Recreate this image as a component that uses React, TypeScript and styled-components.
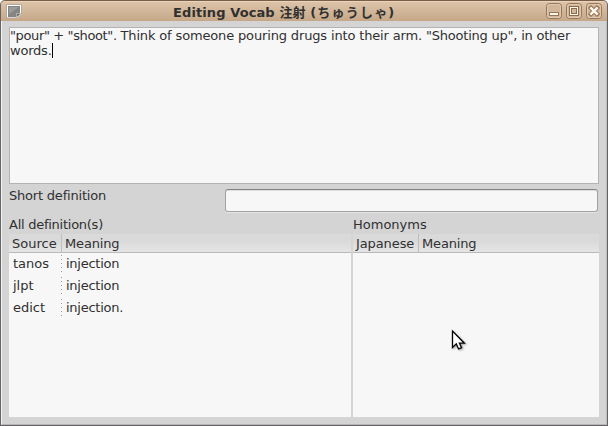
import React from "react";
import styled, { createGlobalStyle } from "styled-components";

const Global = createGlobalStyle`
  * { box-sizing: border-box; }
  body { margin: 0; background: #fff; overflow: hidden; }
`;

const Window = styled.main`
  position: relative;
  display: flex;
  flex-direction: column;
  width: 608px;
  height: 426px;
  overflow: hidden;
  background: #d4d4d4;
  color: #303030;
  font: 13px/15px "DejaVu Sans", "Noto Sans CJK JP", sans-serif;
  border: solid #656365;
  border-width: 0 1px 1px;
  border-radius: 5px 5px 0 0;
`;

const TitleBar = styled.header`
  display: grid;
  grid-template-columns: 167px 1fr 61px;
  align-items: start;
  flex: 0 0 21px;
  margin: 0 -1px;
  padding-left: 5px;
  border-top: 1px solid #785f48;
  border-left: 1px solid #9b7b5c;
  border-right: 1px solid #8a6b4c;
  border-radius: 5px 5px 0 0;
  background: linear-gradient(#ead2bb 0 1px, #dcc3a9 1px, #c6a888);
  & > svg { margin-top: 2px; }
`;

const Title = styled.h1`
  margin: 3px 0 0 0;
  font: bold 13px/18px "DejaVu Sans", "Noto Sans CJK JP", sans-serif;
  height: 17px;
  letter-spacing: 0.1px;
  white-space: nowrap;
`;

const Reading = styled.span`
  letter-spacing: 1.2px;
`;

const Controls = styled.div`
  display: flex;
  gap: 4px;
  padding-top: 2px;
`;

const ControlButton = styled.button`
  width: 16px;
  height: 16px;
  padding: 0;
  border: 0;
  background: none;
  svg { display: block; }
`;

const Body = styled.section`
  display: flex;
  flex-direction: column;
  flex: 1;
  padding: 6px 7px 7px 7px;
  border-left: 1px solid #f4f4f4;
  border-right: 1px solid #bdbdbd;
  border-bottom: 1px solid #b5b5b5;
`;

const Notes = styled.div`
  flex: 0 0 157px;
  border: 1px solid #b3b3b3;
  background: #f7f7f7;
`;

const Line = styled.div`
  display: flex;
  height: 15px;
  white-space: pre;
`;

const Text = styled.span<{ $tracking: number }>`
  letter-spacing: ${(p) => p.$tracking}px;
`;

const Caret = styled.span`
  width: 1px;
  height: 15px;
  background: #000;
`;

const Field = styled.label`
  display: flex;
  justify-content: space-between;
  flex: 0 0 33px;
  padding: 4px 1px 0 0;
`;

const Entry = styled.input`
  width: 373px;
  height: 23px;
  margin-top: 1px;
  border: 1px solid #a1a1a1;
  border-top-color: #858585;
  border-radius: 3px;
  background: #f7f7f7;
  box-shadow: 0 1px #e6e6e6, inset 0 1px #ddd;
  outline: 0;
`;

const Tables = styled.div`
  display: grid;
  grid-template-columns: 342px 246px;
  gap: 2px;
  flex: 1;
`;

const Panel = styled.section`
  display: flex;
  flex-direction: column;
`;

const PanelTitle = styled.div`
  height: 17px;
`;

const Grid = styled.div`
  flex: 1;
  background: #f7f7f7;
`;

const HeaderRow = styled.div<{ $first: number }>`
  display: grid;
  grid-template-columns: ${(p) => p.$first}px 1fr;
  height: 19px;
  border-bottom: 1px solid #bababa;
  background: linear-gradient(#dadada, #d9d9d9 35%, #e5e5e5);
`;

const HeaderCell = styled.div`
  padding: 2px 0 0 3px;
  & + & { border-left: 1px solid #bdbdbd; }
`;

const Row = styled.div`
  display: grid;
  grid-template-columns: 52px 1fr;
  height: 22px;
`;

const Cell = styled.div`
  padding: 3px 0 0 4px;
  & + & {
    padding-left: 5px;
    letter-spacing: -0.25px;
    background: repeating-linear-gradient(#999 0 1px, transparent 1px 4px) 0 2px / 1px 18px no-repeat;
  }
`;

const Pointer = styled.svg`
  position: absolute;
  left: 449px;
  top: 329px;
  filter: drop-shadow(1px 1px 1px rgba(0, 0, 0, 0.35));
`;

const definitions = [
  ["tanos", "injection"],
  ["jlpt", "injection"],
  ["edict", "injection."],
];

function Control({ kind }: { kind: "minimize" | "maximize" | "close" }) {
  return (
    <ControlButton aria-label={kind}>
      <svg width="16" height="16" viewBox="0 0 16 16" fill="none">
        <rect x=".5" y=".5" width="15" height="15" rx="3" fill="#d2b69a" stroke="#94775a" />
        <rect x="1.5" y="1.5" width="13" height="13" rx="2" stroke="#e0c9b1" />
        {kind === "minimize" && <rect x="3.5" y="9.5" width="9" height="3" fill="#fff4e8" stroke="#967859" />}
        {kind === "maximize" && (
          <>
            <rect x="4.5" y="4.5" width="7" height="7" stroke="#8b6d50" strokeWidth="3" />
            <rect x="4.5" y="4.5" width="7" height="7" stroke="#fff4e8" />
          </>
        )}
        {kind === "close" && (
          <>
            <path d="m3.5 3.5 9 9m0-9-9 9" stroke="#8b6d50" strokeWidth="4.4" />
            <path d="m4.3 4.3 7.4 7.4m0-7.4-7.4 7.4" stroke="#fff4e8" strokeWidth="2.6" />
          </>
        )}
      </svg>
    </ControlButton>
  );
}

export default function App() {
  return (
    <>
      <Global />
      <Window>
        <TitleBar>
          <svg width="16" height="16" viewBox="0 0 16 16">
            <path d="M.5 1.5h15V11l-4 4H.5z" fill="#fff" stroke="#b3a79b" />
            <path d="M2 3h12v7.5L10.5 14H2z" fill="#858683" />
            <path d="M3 4h10L3 11z" fill="#9b9c99" />
            <path d="M10.5 14.5v-4h4.5z" fill="#666762" stroke="#c9cac6" strokeWidth=".7" />
          </svg>
          <Title>
            Editing Vocab 注射 <Reading>(ちゅうしゃ)</Reading>
          </Title>
          <Controls>
            <Control kind="minimize" />
            <Control kind="maximize" />
            <Control kind="close" />
          </Controls>
        </TitleBar>
        <Body>
          <Notes>
            <Line>
              <Text $tracking={-0.37}>{'"pour" + "shoot". '}</Text>
              <Text $tracking={-0.15}>{"Think of someone pouring drugs into their arm. "}</Text>
              <Text $tracking={-0.22}>{'"Shooting up", in other'}</Text>
            </Line>
            <Line>
              <Text $tracking={-0.22}>words.</Text>
              <Caret />
            </Line>
          </Notes>
          <Field>
            <Text $tracking={-0.2}>Short definition</Text>
            <Entry />
          </Field>
          <Tables>
            <Panel>
              <PanelTitle>
                <Text $tracking={-0.26}>All definition(s)</Text>
              </PanelTitle>
              <Grid>
                <HeaderRow $first={52}>
                  <HeaderCell>Source</HeaderCell>
                  <HeaderCell>
                    <Text $tracking={-0.15}>Meaning</Text>
                  </HeaderCell>
                </HeaderRow>
                {definitions.map(([source, meaning]) => (
                  <Row key={source}>
                    <Cell>{source}</Cell>
                    <Cell>{meaning}</Cell>
                  </Row>
                ))}
              </Grid>
            </Panel>
            <Panel>
              <PanelTitle>Homonyms</PanelTitle>
              <Grid>
                <HeaderRow $first={65}>
                  <HeaderCell>
                    <Text $tracking={-0.1}>Japanese</Text>
                  </HeaderCell>
                  <HeaderCell>
                    <Text $tracking={-0.15}>Meaning</Text>
                  </HeaderCell>
                </HeaderRow>
              </Grid>
            </Panel>
          </Tables>
        </Body>
        <Pointer width="18" height="23" viewBox="0 0 18 23">
          <path d="M2.5 2v16.5l3.8-3.6 2.3 5 3-1.2-2.2-4.5h5z" fill="#fff" stroke="#000" strokeWidth="1.3" />
        </Pointer>
      </Window>
    </>
  );
}
